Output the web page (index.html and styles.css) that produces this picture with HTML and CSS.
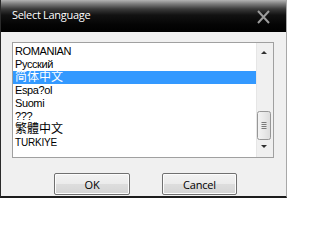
FILE: index.html
```html
<!DOCTYPE html>
<html>
<head>
<meta charset="utf-8">
<link rel="stylesheet" href="styles.css">
</head>
<body>
<div class="window">
  <div class="titlebar">
    <span class="title">Select Language</span>
    <svg class="close" width="13" height="14" viewBox="0 0 13 14">
      <path d="M1 1 L12 13 M12 1 L1 13" stroke="#9c9c9c" stroke-width="2" fill="none"/>
    </svg>
  </div>
  <div class="content">
    <div class="listbox">
      <ul class="items">
        <li class="item">ROMANIAN</li>
        <li class="item">Русский</li>
        <li class="item selected cjk-sc">简体中文</li>
        <li class="item">Espa?ol</li>
        <li class="item">Suomi</li>
        <li class="item">???</li>
        <li class="item cjk-tc">繁體中文</li>
        <li class="item small">TURKIYE</li>
      </ul>
      <svg class="scrollbar" width="17" height="114" viewBox="0 0 17 114">
        <defs>
          <linearGradient id="thumb" x1="0" y1="0" x2="1" y2="0">
            <stop offset="0" stop-color="#f4f4f4"/>
            <stop offset="0.5" stop-color="#e9e9e9"/>
            <stop offset="1" stop-color="#dcdcdc"/>
          </linearGradient>
        </defs>
        <rect x="0" y="0" width="17" height="114" fill="#f0f0f0"/>
        <rect x="0" y="0" width="1" height="114" fill="#e6e6e6"/>
        <path d="M5 11 L11 11 L8 8 Z" fill="#303030"/>
        <path d="M5 102 L11 102 L8 105 Z" fill="#303030"/>
        <rect x="1.5" y="68.5" width="13" height="28" rx="2" fill="url(#thumb)" stroke="#979797"/>
        <path d="M5.5 79.5 H10.5 M5.5 81.5 H10.5 M5.5 83.5 H10.5 M5.5 85.5 H10.5" stroke="#7a7a7a" stroke-width="1"/>
      </svg>
    </div>
    <div class="buttons">
      <button class="btn btn-ok">OK</button>
      <button class="btn btn-cancel">Cancel</button>
    </div>
  </div>
</div>
</body>
</html>
```

FILE: styles.css
```css
html, body {
  margin: 0;
  padding: 0;
}
body {
  width: 287px;
  height: 203px;
  background: #ffffff;
  overflow: hidden;
}
.window {
  width: 285px;
  height: 196px;
  border-left: 1px solid #2a2a2a;
  border-right: 1px solid #a8a8a8;
  border-bottom: 2px solid #1c1c1c;
  display: flex;
  flex-direction: column;
  background: #f0f0f0;
}
.titlebar {
  height: 32px;
  flex: none;
  display: flex;
  justify-content: space-between;
  align-items: flex-start;
  background: linear-gradient(to bottom, #b4b4b4 0px, #7a7a7a 4px, #3a3a3a 9px, #121212 15px, #050505 24px, #000000 32px);
}
.title {
  font-family: "Open Sans", "Liberation Sans", sans-serif;
  font-size: 11px;
  color: #ffffff;
  line-height: 14px;
  padding: 8px 0 0 11px;
  letter-spacing: -0.3px;
}
.close {
  margin: 10px 16px 0 0;
}
.content {
  flex: 1;
  padding: 10px 12px 0 11px;
  display: flex;
  flex-direction: column;
}
.listbox {
  width: 260px;
  height: 114px;
  border: 1px solid #a0a0a0;
  background: #ffffff;
  display: flex;
}
.items {
  list-style: none;
  margin: 0;
  padding: 2px 0 0 0;
  flex: 1;
}
.item {
  height: 13px;
  line-height: 13px;
  padding-left: 2px;
  font-family: "Liberation Sans", Arial, sans-serif;
  font-size: 11px;
  letter-spacing: -0.4px;
  color: #000000;
  white-space: nowrap;
}
.selected {
  background: #3399ff;
  color: #ffffff;
}
.cjk-sc {
  font-family: "Liberation Sans", "Noto Sans CJK SC", sans-serif;
  font-size: 12px;
  letter-spacing: 0;
}
.cjk-tc {
  font-family: "Liberation Sans", "Noto Sans CJK TC", sans-serif;
  font-size: 12px;
  letter-spacing: 0;
}
.small {
  font-size: 10px;
  letter-spacing: -0.2px;
}
.scrollbar {
  flex: none;
  display: block;
}
.buttons {
  display: flex;
  margin-top: 15px;
  padding-left: 42px;
  gap: 32px;
}
.btn {
  height: 22px;
  border: 1px solid #707070;
  border-radius: 2px;
  background: linear-gradient(to bottom, #f2f2f2 0%, #ebebeb 50%, #dddddd 51%, #d4d4d4 100%);
  box-shadow: inset 0 0 0 1px #fcfcfc;
  font-family: "Open Sans", "Liberation Sans", sans-serif;
  font-size: 11px;
  letter-spacing: -0.2px;
  color: #000000;
  padding: 0;
  margin: 0;
}
.btn-ok {
  width: 76px;
}
.btn-cancel {
  width: 75px;
}
```
